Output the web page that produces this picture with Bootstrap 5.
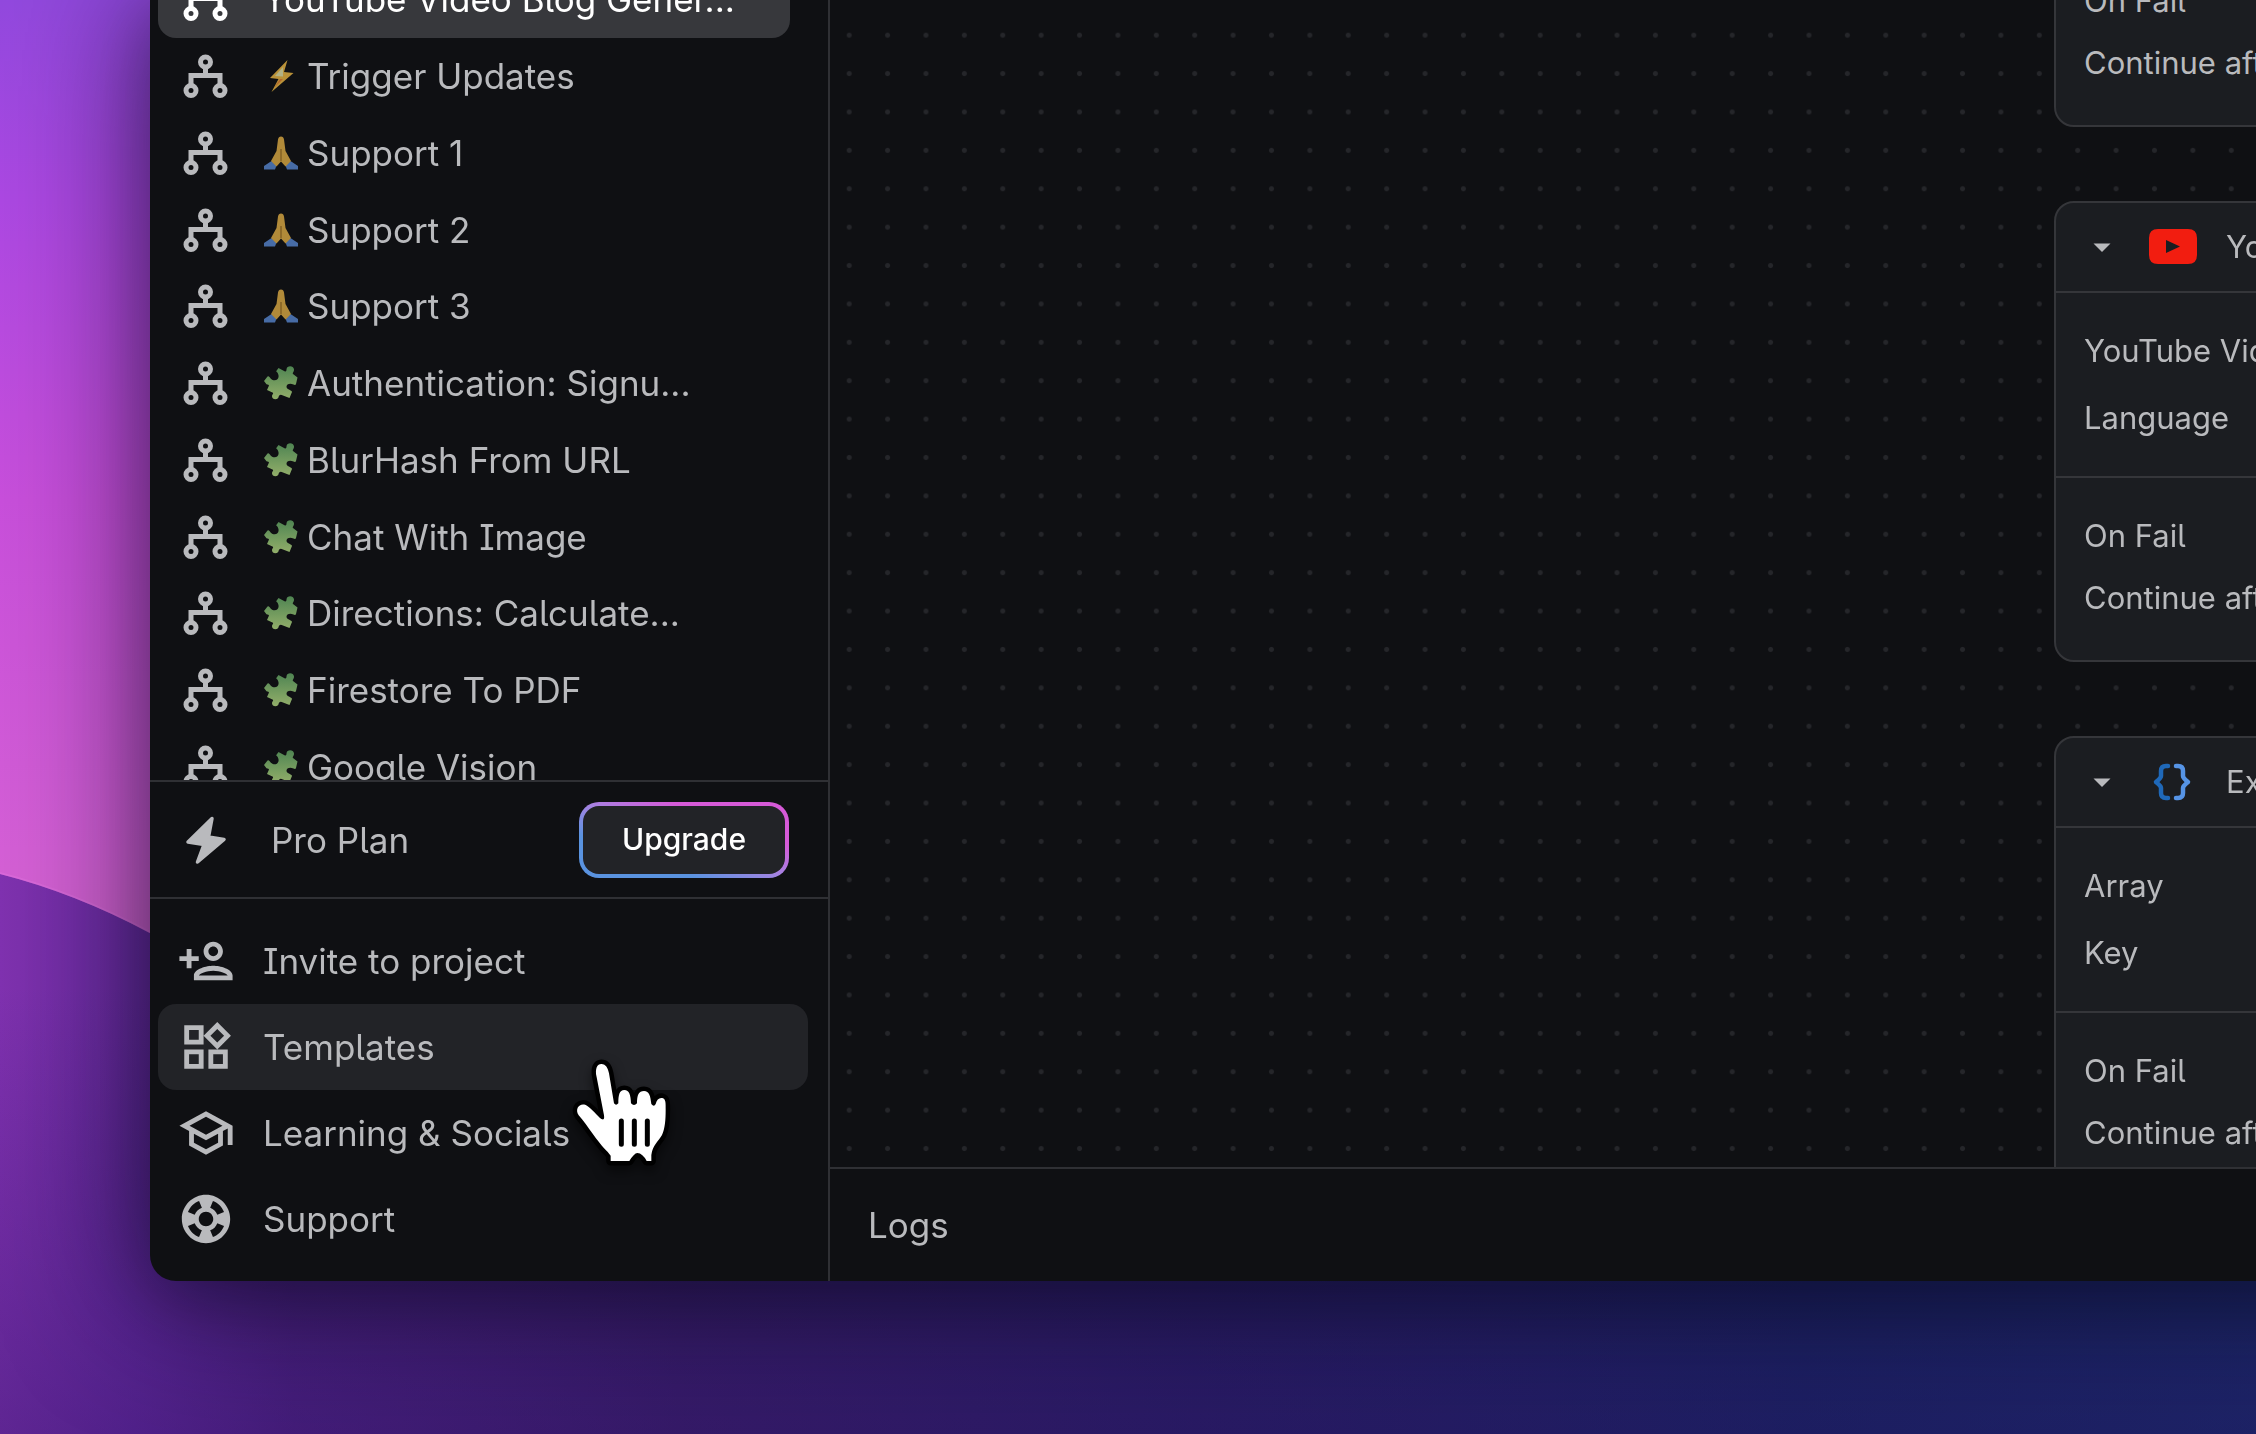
<!DOCTYPE html>
<html lang="en" data-bs-theme="dark">
<head>
<meta charset="utf-8">
<meta name="viewport" content="width=device-width, initial-scale=1">
<title>Logic editor</title>
<link href="https://cdn.jsdelivr.net/npm/bootstrap@5.3.0/dist/css/bootstrap.min.css" rel="stylesheet">
<style>
:root{--ink:#b9babd;--panel:#0f1013;--line:#2f3034;--card:#1b1d21;--hover:#222327;--active:#37383c;--gutter:28px}
body{font-family:Inter,"Liberation Sans",sans-serif;font-feature-settings:"cv05","cv08";font-size:35px;line-height:44px;color:var(--ink);background:#1c1848}
.desk{height:100vh;padding:0 0 153px 150px}
.backdrop{position:fixed;inset:0;width:100%;height:100%;z-index:-1}
.app-window{margin-right:-200px;background:var(--panel);border-radius:0 0 0 26px;box-shadow:0 10px 130px 10px rgba(6,8,28,.62),0 16px 60px rgba(6,8,28,.2)}
.side{width:680px;border-right:2px solid var(--line)}
.flows{height:844px;margin-top:-39px;padding-right:38px}
.side-row{color:inherit;text-decoration:none;padding-left:19px;gap:var(--gutter);border-radius:18px}
.side-row:hover{color:inherit}
.side-row.chosen{background:var(--active);color:#fff}
.side-row.hovered{background:var(--hover)}
.glyph{width:58px;height:58px;flex:none;fill:currentColor}
.emo{width:36px;height:36px;flex:none;opacity:.96}
.plan{height:119px;border-top:2px solid var(--line);border-bottom:2px solid var(--line);padding-right:39px}
.btn-upgrade{--rim:linear-gradient(to top right,#5a93e0 28%,#a583e2 50%,#d65ad8 72%);width:210px;height:76px;border:4px solid transparent;border-radius:20px;font-size:30px;font-weight:500;color:#fff;background:linear-gradient(var(--hover),var(--hover)) padding-box,var(--rim) border-box}
.btn-upgrade:hover{color:#fff;background:linear-gradient(var(--hover),var(--hover)) padding-box,var(--rim) border-box}
.menu{padding:19px 20px 19px 8px}
.menu .side-row{height:86px}
.board{background:radial-gradient(circle,#25262a 2px,transparent 3px) 0 16px / calc(192px / 5) calc(192px / 5)}
.stack{width:402px;gap:74px;margin-top:-334px}
.step{flex:none;background:var(--card);border:2px solid #35363a;border-radius:20px;font-size:31px;line-height:40px;white-space:nowrap}
.step-head{height:90px;padding-left:28px;gap:var(--gutter);border-bottom:2px solid #35363a}
.step-main{padding:38px 28px;gap:27px;border-bottom:2px solid #35363a}
.step-fail{padding:38px 28px 42px;gap:22px}
.caret{width:36px;height:36px;color:inherit}
.step-icon{width:50px;height:40px;flex:none}
.logs{height:114px;border-top:2px solid var(--line);padding-left:38px}
.pointer{position:fixed;left:560px;top:1040px;width:130px;height:140px;pointer-events:none;filter:drop-shadow(0 6px 6px rgba(0,0,0,.5))}
</style>
</head>
<body class="overflow-hidden">
<svg class="backdrop" viewBox="0 0 2256 1434" preserveAspectRatio="none" aria-hidden="true">
  <defs>
    <linearGradient id="glow" x1="0" y1="0" x2="0" y2="1"><stop offset="0" stop-color="#9249de"/><stop offset=".2" stop-color="#ac48e2"/><stop offset=".5" stop-color="#c84fdb"/><stop offset=".85" stop-color="#d45fd6"/><stop offset="1" stop-color="#d467cc"/></linearGradient>
    <linearGradient id="hill" x1="0" y1="0" x2="1" y2="0"><stop offset="0" stop-color="#8032b0"/><stop offset=".06" stop-color="#6a2ba2"/><stop offset=".13" stop-color="#552488"/><stop offset=".3" stop-color="#40206f"/><stop offset=".53" stop-color="#2d2068"/><stop offset=".8" stop-color="#1c2766"/><stop offset="1" stop-color="#1c2d6c"/></linearGradient>
    <linearGradient id="dusk" x1="0" y1="0" x2="0" y2="1"><stop offset=".2" stop-color="#200e5c" stop-opacity="0"/><stop offset="1" stop-color="#200e5c" stop-opacity=".35"/></linearGradient>
    <linearGradient id="leaf" x1="0" y1="0" x2="0" y2="1"><stop offset="0" stop-color="#528a55"/><stop offset="1" stop-color="#98b56e"/></linearGradient>
  </defs>
  <rect width="2256" height="1000" fill="url(#glow)"/>
  <path d="M0 874Q75 893 150 933L400 1060H2256V1434H0Z" fill="url(#hill)"/>
  <path d="M0 874Q75 893 150 933L400 1060H2256V1434H0Z" fill="url(#dusk)"/>
  <path d="M0 873Q75 892 150 932" fill="none" stroke="#e070e0" stroke-opacity=".5" stroke-width="2"/>
</svg>
<svg class="d-none" aria-hidden="true">
  <symbol id="flow" viewBox="0 0 58 58"><g fill="none" stroke="currentColor" stroke-width="5"><circle cx="28.5" cy="15" r="5"/><circle cx="14" cy="43.5" r="5"/><circle cx="43" cy="43.5" r="5"/><path d="M28.5 20v9M14 38v-9.500h29V38"/></g></symbol>
  <symbol id="zap" viewBox="0 0 36 36"><path d="M24.500 2 7 20l8.500 1L8.500 34l22-19-9.500-1z" fill="#c0973a"/><path d="M20 9l-8 9 8 .5z" fill="#b9b98a"/><path d="M11 30l6-9 3 0z" fill="#b86a2c"/></symbol>
  <symbol id="pray" viewBox="0 0 36 36"><path d="M1 34.500V31l7.500-5 5 4.500-1.500 4zM35 34.500V31l-7.500-5-5 4.500 1.500 4z" fill="#4a70ad"/><path d="M18 1.500q-2.500 0-3 3L13.500 16 8 26l5.500 5.500 4.500-5 4.500 5L28 26l-5.500-10L21 4.500q-.5-3-3-3z" fill="#b88f3b"/><path d="M18 14v12" stroke="#7d5a20" stroke-width="1.200"/></symbol>
  <symbol id="piece" viewBox="0 0 36 36"><path fill="url(#leaf)" d="M15.500 3l6.500 3.500q1.500.5 1.500-2c0-4 7-4.500 7.500 0 .2 2.500-2 3.500-1 4.500l4.500 3.500-1.500 6.500q-.5 1.500-2.500.5c-6.500-2.500-9.500 3-4.500 5 1.500 1.500 3 1 3 2.500L26.500 33 20 30.500q-2-1-3-.5c-1.500.5-1 2-2 3.300-2.500 2-6 .7-6-2 0-2 1.500-2.300 1-3.600L4 25l2-4.500q0-1-2.500-1.200L1 16l3.500-4.500q1-.8 2.200.7c4 6 11 2.500 8.300-3.500-.3-1.700-2-1.700-1.700-2.700z"/></symbol>
  <symbol id="invite" viewBox="0 0 24 24"><path d="M15 12c2.210 0 4-1.790 4-4s-1.790-4-4-4-4 1.790-4 4 1.790 4 4 4zm0-6c1.100 0 2 .9 2 2s-.9 2-2 2-2-.9-2-2 .9-2 2-2zm0 8c-2.670 0-8 1.340-8 4v2h16v-2c0-2.660-5.330-4-8-4zm-6 4c.22-.72 3.310-2 6-2 2.700 0 5.800 1.290 6 2H9zm-3-3v-3h3v-2H6V7H4v3H1v2h3v3z"/></symbol>
  <symbol id="widgets" viewBox="0 0 24 24"><path d="M16.660 4.520l2.830 2.830-2.830 2.830-2.830-2.830 2.830-2.830M9 5v4H5V5h4m10 10v4h-4v-4h4M9 15v4H5v-4h4m7.660-13.310L11 7.340 16.660 13l5.660-5.660-5.660-5.650zM11 3H3v8h8V3zm10 10h-8v8h8v-8zm-10 0H3v8h8v-8z"/></symbol>
  <symbol id="school" viewBox="0 0 24 24"><path d="M12 3L1 9l4 2.180v6L12 21l7-3.820v-6l2-1.090V17h2V9L12 3zm6.820 6L12 12.720 5.180 9 12 5.280 18.820 9zM17 15.990l-5 2.730-5-2.730v-3.720L12 15l5-2.730v3.720z"/></symbol>
  <symbol id="buoy" viewBox="0 0 24 24"><path d="M12 2C6.480 2 2 6.480 2 12s4.480 10 10 10 10-4.480 10-10S17.520 2 12 2zm7.460 7.120l-2.780 1.150c-.51-1.360-1.580-2.440-2.950-2.940l1.150-2.780c2.100.8 3.770 2.470 4.580 4.570zM12 15c-1.660 0-3-1.340-3-3s1.340-3 3-3 3 1.340 3 3-1.340 3-3 3zM9.130 4.540l1.170 2.780c-1.380.5-2.470 1.590-2.980 2.970L4.540 9.130c.81-2.110 2.480-3.780 4.590-4.590zM4.540 14.870l2.780-1.150c.51 1.380 1.590 2.460 2.970 2.960l-1.170 2.780c-2.100-.81-3.770-2.480-4.580-4.590zm10.340 4.590l-1.150-2.780c1.370-.51 2.450-1.590 2.950-2.970l2.780 1.170c-.81 2.100-2.480 3.770-4.580 4.580z"/></symbol>
  <symbol id="tri" viewBox="0 0 36 36"><path d="M9.500 14.500h17L18 23z" fill="currentColor"/></symbol>
</svg>

<div class="desk">
  <div class="app-window d-flex h-100 overflow-visible">
    <aside class="side d-flex flex-column flex-shrink-0">
      <nav class="flex-grow-1 overflow-hidden ps-2" style="min-height:0" aria-label="Logics">
        <ul class="flows list-unstyled d-flex flex-column mb-0">
          <li class="d-flex flex-fill"><a href="#" class="side-row chosen d-flex align-items-center w-100"><svg class="glyph"><use href="#flow"/></svg>YouTube Video Blog Gener...</a></li>
          <li class="d-flex flex-fill"><a href="#" class="side-row d-flex align-items-center w-100"><svg class="glyph"><use href="#flow"/></svg><span class="d-flex align-items-center gap-2"><svg class="emo"><use href="#zap"/></svg>Trigger Updates</span></a></li>
          <li class="d-flex flex-fill"><a href="#" class="side-row d-flex align-items-center w-100"><svg class="glyph"><use href="#flow"/></svg><span class="d-flex align-items-center gap-2"><svg class="emo"><use href="#pray"/></svg>Support 1</span></a></li>
          <li class="d-flex flex-fill"><a href="#" class="side-row d-flex align-items-center w-100"><svg class="glyph"><use href="#flow"/></svg><span class="d-flex align-items-center gap-2"><svg class="emo"><use href="#pray"/></svg>Support 2</span></a></li>
          <li class="d-flex flex-fill"><a href="#" class="side-row d-flex align-items-center w-100"><svg class="glyph"><use href="#flow"/></svg><span class="d-flex align-items-center gap-2"><svg class="emo"><use href="#pray"/></svg>Support 3</span></a></li>
          <li class="d-flex flex-fill"><a href="#" class="side-row d-flex align-items-center w-100"><svg class="glyph"><use href="#flow"/></svg><span class="d-flex align-items-center gap-2"><svg class="emo"><use href="#piece"/></svg>Authentication: Signu...</span></a></li>
          <li class="d-flex flex-fill"><a href="#" class="side-row d-flex align-items-center w-100"><svg class="glyph"><use href="#flow"/></svg><span class="d-flex align-items-center gap-2"><svg class="emo"><use href="#piece"/></svg>BlurHash From URL</span></a></li>
          <li class="d-flex flex-fill"><a href="#" class="side-row d-flex align-items-center w-100"><svg class="glyph"><use href="#flow"/></svg><span class="d-flex align-items-center gap-2"><svg class="emo"><use href="#piece"/></svg>Chat With Image</span></a></li>
          <li class="d-flex flex-fill"><a href="#" class="side-row d-flex align-items-center w-100"><svg class="glyph"><use href="#flow"/></svg><span class="d-flex align-items-center gap-2"><svg class="emo"><use href="#piece"/></svg>Directions: Calculate...</span></a></li>
          <li class="d-flex flex-fill"><a href="#" class="side-row d-flex align-items-center w-100"><svg class="glyph"><use href="#flow"/></svg><span class="d-flex align-items-center gap-2"><svg class="emo"><use href="#piece"/></svg>Firestore To PDF</span></a></li>
          <li class="d-flex flex-fill"><a href="#" class="side-row d-flex align-items-center w-100"><svg class="glyph"><use href="#flow"/></svg><span class="d-flex align-items-center gap-2"><svg class="emo"><use href="#piece"/></svg>Google Vision</span></a></li>
        </ul>
      </nav>
      <div class="plan d-flex align-items-center justify-content-between flex-shrink-0 ps-2">
        <div class="side-row d-flex align-items-center"><svg class="glyph" viewBox="0 0 58 58"><path d="M35 7.500 11 31l16 2.500L20.500 51 47 28.500 31.500 26z" stroke="currentColor" stroke-width="3.500" stroke-linejoin="round"/></svg><span class="ps-2">Pro Plan</span></div>
        <button type="button" class="btn btn-upgrade p-0">Upgrade</button>
      </div>
      <nav class="menu d-flex flex-column flex-shrink-0" aria-label="Project">
        <a href="#" class="side-row d-flex align-items-center"><svg class="glyph"><use href="#invite"/></svg>Invite to project</a>
        <a href="#" class="side-row hovered d-flex align-items-center"><svg class="glyph"><use href="#widgets"/></svg>Templates</a>
        <a href="#" class="side-row d-flex align-items-center"><svg class="glyph"><use href="#school"/></svg>Learning &amp; Socials</a>
        <a href="#" class="side-row d-flex align-items-center"><svg class="glyph"><use href="#buoy"/></svg>Support</a>
      </nav>
    </aside>

    <main class="flex-grow-1 d-flex flex-column" style="min-width:0">
      <div class="board flex-grow-1 overflow-hidden d-flex justify-content-end" style="min-height:0">
        <div class="stack d-flex flex-column">
          <section class="step">
            <div class="step-head"></div>
            <div class="step-main d-flex flex-column"><div>URL</div><div>Method</div></div>
            <div class="step-fail d-flex flex-column"><div>On Fail</div><div>Continue after</div></div>
          </section>
          <section class="step">
            <div class="step-head d-flex align-items-center">
              <button type="button" class="caret btn p-0 border-0 d-flex" aria-label="Collapse"><svg width="36" height="36"><use href="#tri"/></svg></button>
              <svg class="step-icon" viewBox="0 0 50 40"><path fill-rule="evenodd" d="M10 2h30q9 0 9 9v17q0 9-9 9H10q-9 0-9-9V11q0-9 9-9zM18 13v13l14-6.500z" fill="#f21d10"/></svg>
              <span>YouTube</span>
            </div>
            <div class="step-main d-flex flex-column"><div>YouTube Video</div><div>Language</div></div>
            <div class="step-fail d-flex flex-column"><div>On Fail</div><div>Continue after</div></div>
          </section>
          <section class="step">
            <div class="step-head d-flex align-items-center">
              <button type="button" class="caret btn p-0 border-0 d-flex" aria-label="Collapse"><svg width="36" height="36"><use href="#tri"/></svg></button>
              <svg class="step-icon" viewBox="0 0 50 40" fill="none" stroke-width="4.500" stroke-linecap="round" stroke-linejoin="round"><path d="M20 4h-2q-5 0-5 5v5q0 2-5 6 5 4 5 6v5q0 5 5 5h2" stroke="#1f68b8"/><path d="M28 4h2q5 0 5 5v5q0 2 5 6-5 4-5 6v5q0 5-5 5h-2" stroke="#5694e6"/></svg>
              <span>Extract</span>
            </div>
            <div class="step-main d-flex flex-column"><div>Array</div><div>Key</div></div>
            <div class="step-fail d-flex flex-column"><div>On Fail</div><div>Continue after</div></div>
          </section>
        </div>
      </div>
      <footer class="logs d-flex align-items-center flex-shrink-0">Logs</footer>
    </main>
  </div>
</div>

<svg class="pointer" viewBox="0 0 390 420" aria-hidden="true">
  <path d="M152 363V347Q146 338 135 328C110 302 85 260 56 226 42 205 62 185 82 198 95 206 112 228 124 237 133 241 133 236 132 226L110 112C104 85 112 72 124 72 138 72 144 85 147 100L162 190Q168 198 175 190C175 165 178 150 193 150 208 150 212 165 213 190Q222 200 231 190C231 165 236 153 252 153 268 153 271 168 274 192Q282 202 287 192C290 178 298 172 307 174 318 177 317 190 317 210 317 240 315 265 306 285 295 305 278 315 274 345V363H260Q248 340 232 339 222 340 208 363Z" fill="#fff" stroke="#000" stroke-width="27" stroke-linejoin="round" paint-order="stroke"/>
  <path d="M184 243v70M223 243v70M262 243v70" stroke="#000" stroke-width="15" stroke-linecap="round"/>
</svg>
<script src="https://cdn.jsdelivr.net/npm/bootstrap@5.3.0/dist/js/bootstrap.bundle.min.js"></script>
</body>
</html>
